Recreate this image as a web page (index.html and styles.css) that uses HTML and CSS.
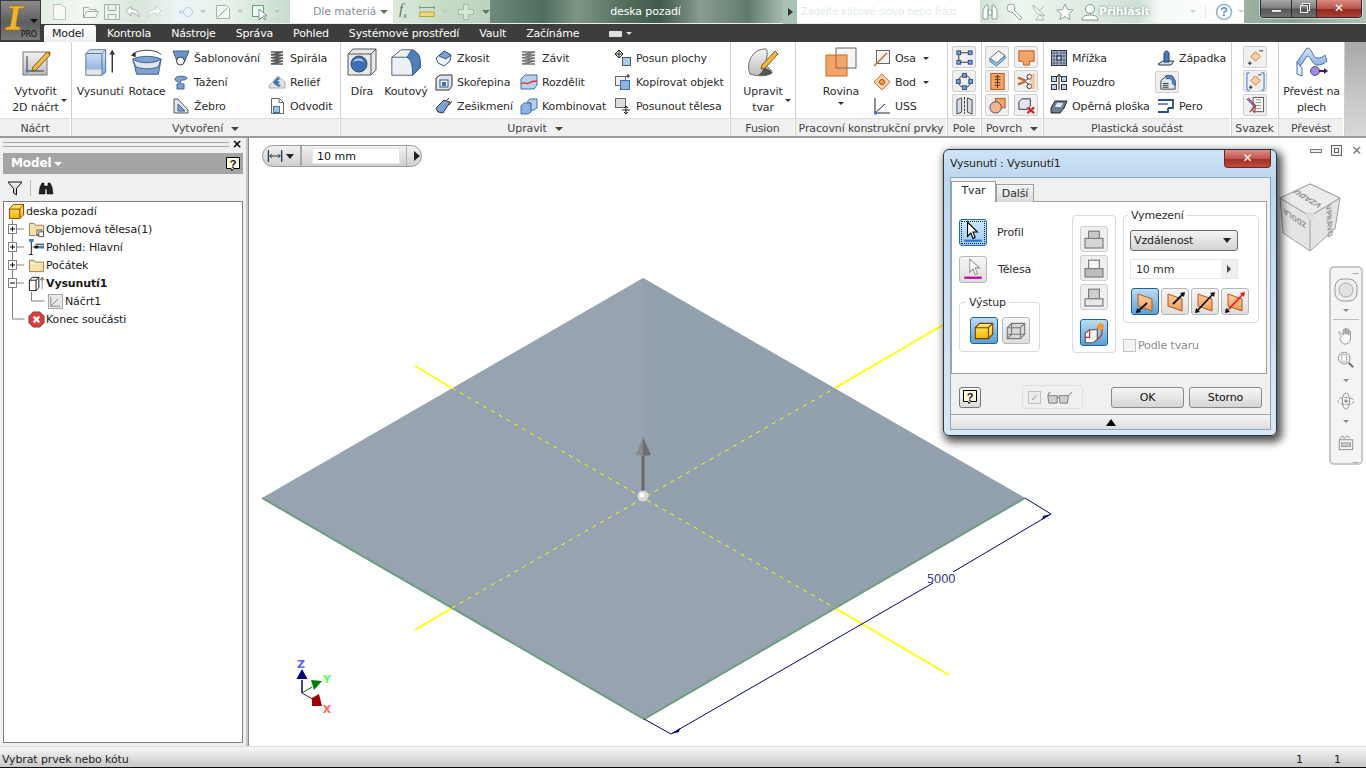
FILE: index.html
```html
<!DOCTYPE html>
<html lang="cs">
<head>
<meta charset="utf-8">
<title>deska pozadí</title>
<link rel="stylesheet" href="styles.css">
</head>
<body>
<svg class="defs" width="0" height="0">
  <defs>
    <linearGradient id="gBlue" x1="0" y1="0" x2="0" y2="1"><stop offset="0" stop-color="#dbe8f6"/><stop offset="1" stop-color="#7fa8d8"/></linearGradient>
    <linearGradient id="gGray" x1="0" y1="0" x2="0" y2="1"><stop offset="0" stop-color="#f4f4f4"/><stop offset="1" stop-color="#bdbdbd"/></linearGradient>
    <linearGradient id="gOrange" x1="0" y1="0" x2="0" y2="1"><stop offset="0" stop-color="#fbd0a8"/><stop offset="1" stop-color="#ee9a58"/></linearGradient>
    <linearGradient id="gGold" x1="0" y1="0" x2="0" y2="1"><stop offset="0" stop-color="#fff07a"/><stop offset="1" stop-color="#f2b705"/></linearGradient>
    <symbol id="tPlus" viewBox="0 0 24 18"><path d="M13 9h7M8.500 0v4.500M8.500 13.500V18" stroke="#808080" fill="none"/><rect x="4.500" y="4.500" width="8" height="9" fill="#fff" stroke="#808080"/><path d="M6 9h5M8.500 6.500v5" stroke="#000" fill="none"/></symbol>
    <symbol id="tMinus" viewBox="0 0 24 18"><path d="M13 9h7M8.500 0v4.500M8.500 13.500V18" stroke="#808080" fill="none"/><rect x="4.500" y="4.500" width="8" height="9" fill="#fff" stroke="#808080"/><path d="M6 9h5" stroke="#000" fill="none"/></symbol>
    <symbol id="folder" viewBox="0 0 18 16"><path d="M1.500 14.500v-12h5l1.500 2h8.500v10z" fill="#f7dfae" stroke="#9a7a3c"/><path d="M2 6h14" stroke="#fff2d4"/></symbol>
    <symbol id="ghostb" viewBox="0 0 20 20"><rect x="5.500" y="3.500" width="9" height="7" fill="#c9c9c9" stroke="#7e7e7e"/><rect x="2.500" y="9.500" width="15" height="8" fill="#d6d6d6" stroke="#7e7e7e"/></symbol>
    <symbol id="ghostc" viewBox="0 0 20 20"><rect x="5.500" y="3.500" width="9" height="7" fill="#f4f4f4" stroke="#7e7e7e"/><rect x="2.500" y="10.500" width="15" height="7" fill="#bdbdbd" stroke="#7e7e7e"/></symbol>
    <symbol id="ghostd" viewBox="0 0 20 20"><rect x="5.500" y="3.500" width="9" height="8" fill="#d0d0d0" stroke="#7e7e7e"/><rect x="2.500" y="11.500" width="15" height="6" fill="#e8e8e8" stroke="#7e7e7e"/></symbol>
    <symbol id="wedge" viewBox="0 0 24 24"><path d="M5 4l14 5v12L5 16z" fill="url(#gOrange)" stroke="#b5561a"/></symbol>
  </defs>
</svg>

<div class="app">
  <header class="titlebar">
    <div class="qat">
      <svg class="qi" viewBox="0 0 16 18"><path d="M2.500 1.500h8l4 4v11h-12z" fill="#f7fbf7" stroke="#b9c8bb"/></svg>
      <span class="qgap"></span>
      <svg class="qi" viewBox="0 0 18 18"><path d="M1.500 14.500v-10h5l1.500 2h6v2M1.500 14.500l3-6h12l-3 6z" fill="#f4f9f4" stroke="#9fb0a2"/></svg>
      <svg class="qi" viewBox="0 0 18 18"><path d="M1.500 1.500h15v15h-15zM5 1.500v6h8v-6M5 16.500v-5h8v5" fill="#eef5ef" stroke="#a3b3a6"/></svg>
      <svg class="qi" viewBox="0 0 18 18"><path d="M7 3L2 8l5 5V10c4 0 6 1 8 4 0-5-3-8-8-8z" fill="#f8fbf8" stroke="#a3b3a6"/></svg>
      <svg class="qi" viewBox="0 0 18 18"><path d="M11 3l5 5-5 5V10c-4 0-6 1-8 4 0-5 3-8 8-8z" fill="#f8fbf8" stroke="#c6d4c8"/></svg>
      <span class="qgap"></span>
      <svg class="qi" viewBox="0 0 18 18"><circle cx="11" cy="9" r="4.500" fill="#e9f3fb" stroke="#b5cbdd"/><path d="M7 9H2M5 6.500L2 9l3 2.500" stroke="#b5cbdd" fill="none"/></svg>
      <span class="tri-s"></span>
      <svg class="qi" viewBox="0 0 18 18"><path d="M2.500 2.500h10l3 3v10h-13z" fill="#f4f9f4" stroke="#a3b3a6"/><path d="M4 14L13 5" stroke="#92a596"/></svg>
      <span class="tri-s"></span>
      <svg class="qi" viewBox="0 0 18 18"><rect x="1.500" y="2.500" width="11" height="11" fill="#eef8ee" stroke="#5fa56c"/><path d="M8 6v11l3-3 3 3 1-1-3-3h4z" fill="#fff" stroke="#7a8a8d"/></svg>
      <span class="tri-s"></span>
    </div>
    <div class="combo"><span class="combo-text">Dle materiá</span><span class="tri-d"></span></div>
    <div class="fx">
      <span class="fx-t">f<sub>x</sub></span>
      <svg class="qi" viewBox="0 0 20 16"><path d="M2 3h16M2 1v4M18 1v4" stroke="#7a8a70" fill="none"/><rect x="2" y="8" width="16" height="5" fill="#f3d77a" stroke="#b59a3c"/></svg>
      <span class="tri-s"></span>
      <svg class="qi" viewBox="0 0 18 18"><path d="M6.500 1.500h5v5h5v5h-5v5h-5v-5h-5v-5h5z" fill="#d6e6d6" stroke="#a5baa7"/></svg>
      <span class="tri-d"></span>
    </div>
    <div class="doc-title">deska pozadí</div>
    <div class="search">
      <span class="search-arrow"></span>
      <span class="search-text">Zadejte klíčové slovo nebo frázi</span>
    </div>
    <div class="info">
      <svg class="ii" viewBox="0 0 20 20"><path d="M3 17V8l3-5h2v14zM12 17V3h2l3 5v9zM8 8h4v5H8z" fill="#fff" stroke="#8da596"/></svg>
      <svg class="ii" viewBox="0 0 20 20"><circle cx="6" cy="6" r="4" fill="#fff" stroke="#8da596"/><path d="M9 8l8 8-2 2-8-8" fill="#fff" stroke="#8da596"/></svg>
      <svg class="ii" viewBox="0 0 20 20"><path d="M3 3c1 7 5 10 12 11zM9 9l5-5M6 18l4-6 4 6z" fill="#f4f8f4" stroke="#a9bbae"/></svg>
      <svg class="ii" viewBox="0 0 20 20"><path d="M10 2l2.400 5.400 5.800.6-4.400 3.900 1.300 5.700-5.100-3-5.100 3 1.300-5.700L1.800 8l5.800-.6z" fill="#fbfdfb" stroke="#8da596"/></svg>
      <svg class="ii" viewBox="0 0 20 20"><circle cx="10" cy="7" r="4.500" fill="#fff" stroke="#7e9686"/><path d="M2 18c0-4 4-5 8-5s8 1 8 5z" fill="#fff" stroke="#7e9686"/></svg>
      <span class="login">Přihlásit</span>
      <span class="tri-w login-tri"></span>
      <span class="sep-w"></span>
      <svg class="help-c" viewBox="0 0 18 18"><circle cx="9" cy="9" r="7.500" fill="#fff" stroke="#8db2d2" stroke-width="1.500"/><text x="9" y="13" class="help-q">?</text></svg>
      <span class="tri-w"></span>
    </div>
    <div class="caption">
      <div class="win-btns">
        <span class="wb wb-min"><i></i></span>
        <span class="wb wb-res"><i></i></span>
        <span class="wb wb-close">✕</span>
      </div>
    </div>
  </header>

  <div class="app-btn">
    <svg class="app-i" viewBox="0 0 26 30"><path d="M7 2h17l-1 2-6 1-3 19 5 1-1 3H2l1-3 5-1 3-19-5-1z" fill="#f0b428" stroke="#9a6a10" stroke-width=".6"/></svg>
    <span class="app-caret"></span>
    <span class="pro">PRO</span>
  </div>

  <nav class="tabs">
    <span class="tab tab-on">Model</span>
    <span class="tab">Kontrola</span>
    <span class="tab">Nástroje</span>
    <span class="tab">Správa</span>
    <span class="tab">Pohled</span>
    <span class="tab">Systémové prostředí</span>
    <span class="tab">Vault</span>
    <span class="tab">Začínáme</span>
    <span class="tab-ctl"><i></i><b></b></span>
  </nav>

  <section class="ribbon">
    <div class="panel w-sketch">
      <div class="pbody">
        <div class="lg lg-sketch">
          <svg class="lgi" viewBox="0 0 32 32"><rect x="3" y="6" width="24" height="23" fill="url(#gGray)" stroke="#777"/><path d="M7 25h17M7 25V10" stroke="#333" fill="none"/><rect x="5.500" y="23.500" width="3" height="3" fill="#3a8ad8"/><path d="M13 21l-1 4 4-1L30 9l-3-3z" fill="#f5b840" stroke="#7d5a18"/><path d="M27 6l3 3 1-2-2-2z" fill="#c63"/></svg>
          <span class="lbl">Vytvořit<br>2D náčrt</span><span class="caret abs-sketch"></span>
        </div>
      </div>
      <div class="ptitle">Náčrt</div>
    </div>

    <div class="panel w-create">
      <div class="pbody">
        <div class="lg lg-ext">
          <svg class="lgi" viewBox="0 0 36 32"><path d="M3 7l4-4h17v24l-4 3H3z" fill="url(#gBlue)" stroke="#52739c"/><path d="M3 7h17v23M20 7l4-4" stroke="#52739c" fill="none"/><rect x="3.500" y="24" width="16" height="5.500" fill="#e5e5e5"/><path d="M31 27V6" stroke="#333" stroke-width="1.500"/><path d="M28 8l3-5 3 5z" fill="#333"/></svg>
          <span class="lbl">Vysunutí</span>
        </div>
        <div class="lg lg-rot">
          <svg class="lgi" viewBox="0 0 36 32"><path d="M2 8C10 2 26 2 33 8" stroke="#333" fill="none"/><path d="M1 9l5-3v5z" fill="#333"/><path d="M3 13c8-4 22-4 30 0l-3 16H7z" fill="#7ea2d0" stroke="#3f5f8e"/><path d="M3 13c8 5 22 5 30 0l-3 8c-7 3-16 3-24 0z" fill="#dfe6ef" stroke="#3f5f8e"/></svg>
          <span class="lbl">Rotace</span>
        </div>
        <div class="col c-create1">
          <div class="sm"><svg class="smi" viewBox="0 0 18 18"><path d="M1 2h16l-4 10H5z" fill="#6c94c6" stroke="#3f5f8e"/><circle cx="8.500" cy="12" r="4" fill="#fff" stroke="#333"/></svg>Šablonování</div>
          <div class="sm"><svg class="smi" viewBox="0 0 18 18"><path d="M3 6c0-3 10-4 12-1-1 3-4 1-6 3-2 2 1 3 3 3v5H5v-5c2 0 3-1 2-2-1 0-3 0-4-3z" fill="#7ea2d0" stroke="#3f5f8e"/></svg>Tažení</div>
          <div class="sm"><svg class="smi" viewBox="0 0 18 18"><path d="M2 2v14h14v-3L6 2z" fill="#dde5ef" stroke="#555"/><path d="M6 7v7h7z" fill="#7ea2d0" stroke="#3f5f8e"/></svg>Žebro</div>
        </div>
        <div class="col c-create2">
          <div class="sm"><svg class="smi" viewBox="0 0 18 18"><path d="M3 3h12L3 6h12L3 9h12L3 12h12L3 15h12" fill="none" stroke="#555" stroke-width="1.300"/></svg>Spirála</div>
          <div class="sm"><svg class="smi" viewBox="0 0 18 18"><path d="M1 13l9-10 7 6v6H1z" fill="#e2e2e2" stroke="#aaa"/><path d="M5 9l5-5 2 2-3 2 3 1-2 2 3 1-2 2-5-3z" fill="#3d73b4"/></svg>Reliéf</div>
          <div class="sm"><svg class="smi" viewBox="0 0 18 18"><path d="M3.500 1.500h8l4 4v11h-12z" fill="#fff" stroke="#666"/><path d="M11 1.500v4h4.500" fill="none" stroke="#666"/><rect x="5.500" y="9.500" width="6" height="6" fill="#9cc3e6" stroke="#3f72a8"/></svg>Odvodit</div>
        </div>
      </div>
      <div class="ptitle">Vytvoření<span class="tri-t"></span></div>
    </div>

    <div class="panel w-edit">
      <div class="pbody">
        <div class="lg lg-hole">
          <svg class="lgi" viewBox="0 0 32 32"><path d="M2 8l5-5h23v21l-5 5H2z" fill="#e8e8e8" stroke="#555"/><path d="M2 8h23v21M25 8l5-5" fill="none" stroke="#555"/><circle cx="13" cy="18" r="8" fill="#3f6fb0" stroke="#234f86"/><path d="M7 16a6 6 0 0 1 11 0c-3-2-8-2-11 0z" fill="#c6dbf0"/></svg>
          <span class="lbl">Díra</span>
        </div>
        <div class="lg lg-fillet">
          <svg class="lgi" viewBox="0 0 36 32"><path d="M3 11L13 3h11c6 2 9 6 9 13v6l-8 8H3z" fill="#eceff3" stroke="#4a5f7e"/><path d="M24 3c6 2 9 6 9 13v6l-8 8c0-10-1-16-6-19z" fill="#4f7fb8" stroke="#2f5588"/><path d="M3 11h16" stroke="#4a5f7e"/></svg>
          <span class="lbl">Koutový</span>
        </div>
        <div class="col c-e1">
          <div class="sm"><svg class="smi" viewBox="0 0 18 18"><path d="M1 9l8-7 7 4-1 6-6 5-6-3z" fill="#eef2f7" stroke="#2f5588"/><path d="M9 2l7 4-5 4-7-3z" fill="#7ea2d0" stroke="#2f5588"/></svg>Zkosit</div>
          <div class="sm"><svg class="smi" viewBox="0 0 18 18"><path d="M1 5l4-3h12v11l-3 4H1z" fill="#dfe6ef" stroke="#333"/><rect x="5" y="7" width="8" height="7" fill="#fff" stroke="#2f5588"/><rect x="7" y="9" width="4" height="4" fill="#3f6fb0"/></svg>Skořepina</div>
          <div class="sm"><svg class="smi" viewBox="0 0 18 18"><path d="M1 11l8-8 6 2-7 11-5-1z" fill="#7ea2d0" stroke="#333"/><path d="M12 3l2-2M14 8l3-4" stroke="#333"/></svg>Zešikmení</div>
        </div>
        <div class="col c-e2">
          <div class="sm"><svg class="smi" viewBox="0 0 18 18"><path d="M2 3h13L2 6h13L2 9h13L2 12h13L2 15h13" fill="none" stroke="#777" stroke-width="1.300"/></svg>Závit</div>
          <div class="sm"><svg class="smi" viewBox="0 0 18 18"><path d="M1 6l4-4h12v10l-3 4H1z" fill="#b9d0ea" stroke="#3f6fb0"/><path d="M1 11c3-3 5 1 8-1s5-2 8-2" fill="none" stroke="#d33" stroke-width="1.300"/></svg>Rozdělit</div>
          <div class="sm"><svg class="smi" viewBox="0 0 18 18"><path d="M1 9l3-3h7v9l-3 2H1z" fill="#8db3de" stroke="#3f6fb0"/><path d="M7 5l3-3h7v9l-3 2H11V6z" fill="#b9d0ea" stroke="#3f6fb0"/></svg>Kombinovat</div>
        </div>
        <div class="col c-e3">
          <div class="sm"><svg class="smi" viewBox="0 0 18 18"><path d="M5 1v8M1 5h8" stroke="#222"/><path d="M3 3l2-2 2 2M3 7l2 2 2-2M3 3L1 5l2 2M7 3l2 2-2 2" fill="none" stroke="#222"/><rect x="8.500" y="8.500" width="8" height="8" fill="#a9cdee" stroke="#555"/></svg>Posun plochy</div>
          <div class="sm"><svg class="smi" viewBox="0 0 18 18"><rect x="1.500" y="3.500" width="10" height="9" fill="#eef2f7" stroke="#666"/><rect x="6.500" y="7.500" width="9" height="9" fill="#8db3de" stroke="#3f6fb0"/><path d="M14 1v4M12 3h4" stroke="#222"/></svg>Kopírovat objekt</div>
          <div class="sm"><svg class="smi" viewBox="0 0 18 18"><rect x="1.500" y="1.500" width="10" height="9" fill="#ddd" stroke="#666"/><path d="M12 9v8M8 13h8" stroke="#222"/><path d="M10 11l2-2 2 2M10 15l2 2 2-2" fill="none" stroke="#222"/></svg>Posunout tělesa</div>
        </div>
      </div>
      <div class="ptitle">Upravit<span class="tri-t"></span></div>
    </div>

    <div class="panel w-fusion">
      <div class="pbody">
        <div class="lg lg-fus">
          <svg class="lgi" viewBox="0 0 34 32"><path d="M4 28C-1 16 8 2 20 3c3 4 0 12-2 16 3 2 8 4 8 8-6 4-16 3-22 1z" fill="url(#gGray)" stroke="#666"/><path d="M17 22c4 0 8 2 9 5-4 3-10 3-14 2 3-2 5-4 5-7z" fill="#555"/><path d="M16 19l-1 4 4-1L32 8l-3-3z" fill="#f5b840" stroke="#7d5a18"/></svg>
          <span class="lbl">Upravit<br>tvar</span><span class="caret abs-fus"></span>
        </div>
      </div>
      <div class="ptitle">Fusion</div>
    </div>

    <div class="panel w-work">
      <div class="pbody">
        <div class="lg lg-plane">
          <svg class="lgi" viewBox="0 0 34 32"><rect x="12" y="2" width="20" height="20" fill="#f4f4f4" stroke="#666"/><rect x="2" y="9" width="21" height="21" fill="#f4a468" stroke="#c8692a"/><path d="M12 9v13h11" fill="none" stroke="#8a6a55"/></svg>
          <span class="lbl">Rovina</span><span class="caret abs-plane"></span>
        </div>
        <div class="col c-work">
          <div class="sm"><svg class="smi" viewBox="0 0 18 18"><rect x="3.500" y="1.500" width="13" height="13" fill="#f4f4f4" stroke="#666"/><path d="M1 17L14 4" stroke="#c8692a" stroke-width="1.500"/></svg>Osa<span class="caret dd-osa"></span></div>
          <div class="sm"><svg class="smi" viewBox="0 0 18 18"><path d="M9 1l8 8-8 8-8-8z" fill="#fbd0a8" stroke="#d4742c"/><circle cx="9" cy="9" r="2.500" fill="#f4a468" stroke="#a04a10"/></svg>Bod<span class="caret dd-bod"></span></div>
          <div class="sm"><svg class="smi" viewBox="0 0 18 18"><path d="M2 1v15h15M2 16L12 7" fill="none" stroke="#222"/><rect x="1" y="14.500" width="3" height="3" fill="#2f7fd8"/></svg>USS</div>
        </div>
      </div>
      <div class="ptitle">Pracovní konstrukční prvky</div>
    </div>

    <div class="panel w-pole">
      <div class="pbody pad-pole">
        <div class="col">
          <div class="ib"><svg class="ibi" viewBox="0 0 20 20"><rect x="2" y="3" width="4" height="4" fill="#7ea2d0" stroke="#244e86"/><rect x="14" y="3" width="4" height="4" fill="#7ea2d0" stroke="#244e86"/><rect x="2" y="13" width="4" height="4" fill="#7ea2d0" stroke="#244e86"/><rect x="14" y="13" width="4" height="4" fill="#7ea2d0" stroke="#244e86"/><path d="M6 5h8M6 15h8M4 7v6" stroke="#333"/></svg></div>
          <div class="ib"><svg class="ibi" viewBox="0 0 20 20"><circle cx="10" cy="10" r="6.500" fill="none" stroke="#333"/><g fill="#7ea2d0" stroke="#244e86"><rect x="8" y="1.500" width="4" height="4"/><rect x="14.500" y="8" width="4" height="4"/><rect x="8" y="14.500" width="4" height="4"/><rect x="1.500" y="8" width="4" height="4"/></g></svg></div>
          <div class="ib"><svg class="ibi" viewBox="0 0 20 20"><path d="M2 4l5-2v15l-5 2zM13 2l5 2v15l-5-2z" fill="#cfdcec" stroke="#444"/><path d="M10 1v18" stroke="#333" stroke-dasharray="3 1"/></svg></div>
        </div>
      </div>
      <div class="ptitle">Pole</div>
    </div>

    <div class="panel w-surf">
      <div class="pbody pad-surf">
        <div class="col">
          <div class="ib"><svg class="ibi" viewBox="0 0 20 20"><path d="M2 11l9-8 7 5-9 8z" fill="#f4f4f4" stroke="#666"/><path d="M2 11v3l7 5 9-8V8l-9 8z" fill="#9cc8ea" stroke="#3f72a8"/></svg></div>
          <div class="ib"><svg class="ibi" viewBox="0 0 20 20"><rect x="3" y="1.500" width="14" height="17" fill="#f4a468" stroke="#b5561a"/><path d="M10 3v14M7 5h6M7 8h6M7 11h6M7 14h6" stroke="#5a3210"/></svg></div>
          <div class="ib"><svg class="ibi" viewBox="0 0 20 20"><rect x="8" y="2.500" width="10" height="10" fill="#f4a468" stroke="#b5561a"/><circle cx="8" cy="12" r="6" fill="#f4b488" stroke="#2f5588"/></svg></div>
        </div>
        <div class="col">
          <div class="ib"><svg class="ibi" viewBox="0 0 20 20"><path d="M2 3h16v11h-5v4H7c0-3-1-4-3-4H2z" fill="#f4a468" stroke="#b5561a"/></svg></div>
          <div class="ib"><svg class="ibi" viewBox="0 0 20 20"><path d="M1 6l8 3M1 13l8-3" stroke="#c8692a" stroke-width="2.500"/><circle cx="13" cy="15" r="2.500" fill="none" stroke="#333"/><circle cx="13" cy="5" r="2.500" fill="none" stroke="#333"/><path d="M9 9l3-2M9 10l3 3" stroke="#333"/><rect x="14" y="2" width="5" height="16" fill="#f4a468" opacity=".5"/></svg></div>
          <div class="ib"><svg class="ibi" viewBox="0 0 20 20"><path d="M2 6l3-3h9v8l-3 3H2z" fill="#dfe6ef" stroke="#334"/><path d="M11 12l7 6M18 12l-7 6" stroke="#d0281c" stroke-width="2.200"/></svg></div>
        </div>
      </div>
      <div class="ptitle">Povrch<span class="tri-t"></span></div>
    </div>

    <div class="panel w-plast">
      <div class="pbody">
        <div class="col c-pl1">
          <div class="sm"><svg class="smi" viewBox="0 0 18 18"><rect x="1.500" y="1.500" width="15" height="15" fill="#a9c0da" stroke="#334"/><path d="M4 2v14M7 2v14M11 2v14M14 2v14M2 4h14M2 7h14M2 11h14M2 14h14" stroke="#334" stroke-width=".6"/><rect x="7" y="7" width="4" height="4" fill="#dde" stroke="#223"/></svg>Mřížka</div>
          <div class="sm"><svg class="smi" viewBox="0 0 18 18"><g fill="#b9d0ea" stroke="#334"><rect x="1.500" y="3.500" width="5" height="5"/><rect x="11.500" y="3.500" width="5" height="5"/><rect x="1.500" y="11.500" width="5" height="5"/><rect x="11.500" y="11.500" width="5" height="5"/></g><path d="M9 17V2M7 4l2-3 2 3" fill="none" stroke="#222"/></svg>Pouzdro</div>
          <div class="sm"><svg class="smi" viewBox="0 0 18 18"><path d="M1 11l4-7h12l-3 7-4 5H1z" fill="#6d7f92" stroke="#222"/><path d="M5 10l2-4h6l-2 4z" fill="#dfe6ef"/></svg>Opěrná ploška</div>
        </div>
        <div class="col c-pl2">
          <div class="sm"><svg class="smi" viewBox="0 0 18 18"><path d="M1 15l5-3h11l-3 4H2z" fill="#cfdcec" stroke="#334"/><path d="M7 13V5c0-4 5-4 5 0v8z" fill="#4a7db8" stroke="#1f4370"/></svg>Západka</div>
          <div class="ib ib-pl"><svg class="ibi" viewBox="0 0 20 20"><path d="M3 8l6-5h6l3 5v9H3z" fill="#dfe6ef" stroke="#444"/><path d="M8 3c6-2 11 3 10 10l-3-2c1-4-2-6-6-5z" fill="#5f8ec6" stroke="#27548c"/><path d="M5 11h6M5 13h6M5 15h6" stroke="#333"/></svg></div>
          <div class="sm"><svg class="smi" viewBox="0 0 18 18"><path d="M1 3h15v8h-5M1 15h10v-4" fill="none" stroke="#24518a" stroke-width="1.800"/><path d="M1 7h10" stroke="#24518a" stroke-width="1.300"/></svg>Pero</div>
        </div>
      </div>
      <div class="ptitle">Plastická součást</div>
    </div>

    <div class="panel w-harn">
      <div class="pbody pad-harn">
        <div class="col">
          <div class="ib"><svg class="ibi" viewBox="0 0 20 20"><path d="M10 4l5 5-5 5-5-5z" fill="#fbd0a8" stroke="#d4742c"/><path d="M14 3h4M2 16h4M4 14v4" stroke="#222"/></svg></div>
          <div class="ib"><svg class="ibi" viewBox="0 0 20 20"><path d="M10 4l5 5-5 5-5-5z" fill="#fbd0a8" stroke="#d4742c"/><path d="M13 3h3M3 16h4M5 14v4" stroke="#222"/><path d="M4 1H1v18h3M16 1h3v18h-3" fill="none" stroke="#2f6fd8"/></svg></div>
          <div class="ib"><svg class="ibi" viewBox="0 0 20 20"><rect x="7.500" y="1.500" width="11" height="15" fill="#fff" stroke="#555"/><path d="M10 4h6M10 7h6M10 10h6M10 13h6" stroke="#888"/><path d="M2 2l8 8-1 8M10 10l-6 7" fill="none" stroke="#c33" stroke-width="1.300"/><path d="M1 3l8 8" stroke="#36c" stroke-width="1.300"/></svg></div>
        </div>
      </div>
      <div class="ptitle">Svazek</div>
    </div>

    <div class="panel w-conv">
      <div class="pbody">
        <div class="lg lg-conv">
          <svg class="lgi" viewBox="0 0 34 32"><path d="M2 16L12 2c5 0 6 10 10 10s6-1 8-3l2 6c-3 3-7 4-10 4-5 0-6-9-10-9L4 22z" fill="url(#gBlue)" stroke="#3f6fb0"/><path d="M2 16v12l5 2V22z" fill="#eef2f7" stroke="#3f6fb0"/><circle cx="20" cy="25" r="4.500" fill="#9c8ad8" stroke="#5c4aa0"/><path d="M24 25h7" stroke="#30206a" stroke-width="2"/><path d="M29 22l4 3-4 3z" fill="#30206a"/></svg>
          <span class="lbl">Převést na<br>plech</span>
        </div>
      </div>
      <div class="ptitle">Převést</div>
    </div>
    <div class="rib-end"></div>
  </section>

  <main class="workspace">
    <aside class="browser">
      <div class="grip"><span class="grip-lines"></span><span class="grip-x">×</span></div>
      <div class="bhead">
        <span class="bhead-t">Model<i class="tri-h"></i></span>
        <svg class="bhelp" viewBox="0 0 16 16"><path d="M1.500 1.500h13v11h-6l-1.500 2-1-2h-4.500z" fill="#fffbe0" stroke="#000"/><text x="8" y="11.500" class="help-b">?</text></svg>
      </div>
      <div class="btools">
        <svg class="bt" viewBox="0 0 16 16"><path d="M1 2h14L9.500 8.500V15l-3-2V8.500z" fill="url(#gGray)" stroke="#111"/></svg>
        <span class="bt-sep"></span>
        <svg class="bt" viewBox="0 0 16 16"><path d="M1 14l1-7 2-4h2v3h4V3h2l2 4 1 7H9V9H7v5z" fill="#222" stroke="#000" stroke-width=".5"/></svg>
      </div>
      <div class="tree">
        <div class="row row-root"><svg class="ti" viewBox="0 0 18 18"><path d="M1.500 6.500l4-5h11v11l-4 4h-11z" fill="url(#gGold)" stroke="#8c3a00"/><path d="M1.500 6.500h11v10M12.500 6.500l4-5" fill="none" stroke="#8c3a00"/></svg>deska pozadí</div>
        <div class="row"><svg class="ex"><use href="#tPlus"/></svg><svg class="ti" viewBox="0 0 18 18"><path d="M1.500 15.500v-13h5l1.500 2h8.500v11z" fill="#f7dfae" stroke="#8a7a5c"/><rect x="9.500" y="9.500" width="5" height="5" fill="#fff" stroke="#555"/><rect x="11.500" y="11.500" width="5" height="5" fill="#fff" stroke="#555"/></svg>Objemová tělesa(1)</div>
        <div class="row"><svg class="ex"><use href="#tPlus"/></svg><svg class="ti" viewBox="0 0 18 18"><path d="M3.500 1v15M1 16.500h4M8 5.500h9M5 8.500h12" fill="none" stroke="#111"/><rect x="1" y="0" width="5" height="3" fill="#3a7cc4"/><rect x="7" y="7" width="4" height="3" fill="#111"/><rect x="12" y="7" width="5" height="3" fill="#3a7cc4"/></svg>Pohled: Hlavní</div>
        <div class="row"><svg class="ex"><use href="#tPlus"/></svg><svg class="ti"><use href="#folder"/></svg>Počátek</div>
        <div class="row row-b"><svg class="ex"><use href="#tMinus"/></svg><svg class="ti" viewBox="0 0 18 18"><path d="M1.500 5.500l3-3h7v11l-3 3h-7z" fill="#fff" stroke="#111"/><path d="M1.500 5.500h7v11M8.500 5.500l3-3" fill="none" stroke="#111"/><path d="M15 15V3M13 5l2-3 2 3z" fill="#888" stroke="#888"/></svg>Vysunutí1</div>
        <div class="row"><svg class="ex2" viewBox="0 0 43 18"><path d="M8.500 0v18M27.500 0v9h13" fill="none" stroke="#808080"/></svg><svg class="ti" viewBox="0 0 18 18"><rect x="1.500" y="1.500" width="15" height="15" fill="#e8e8e8" stroke="#a0a0a0"/><path d="M4 4v10h10M4 14l8-8" fill="none" stroke="#888"/></svg>Náčrt1</div>
        <div class="row"><svg class="ex" viewBox="0 0 24 18"><path d="M8.500 0v9h12" fill="none" stroke="#808080"/></svg><svg class="ti" viewBox="0 0 18 18"><path d="M5.500 1h7L17 5.500v7L12.500 17h-7L1 12.500v-7z" fill="#e33a3a" stroke="#555"/><path d="M6 6l6 6M12 6l-6 6" stroke="#fff" stroke-width="2.400"/></svg>Konec součásti</div>
      </div>
    </aside>
    <div class="splitter"></div>

    <div class="viewport">
      <svg class="scene" viewBox="249 138 1117 608">
        <path d="M415 366L452 388M835 608L949 675M415 630L452 608M835 388L960 315" stroke="#ffff00" stroke-width="2" fill="none"/>
        <polygon points="643,278 1025,498 644,719 262,498" fill="#97a3b1"/>
        <polygon points="643,278 1025,498 835,608 643,498" fill="#93a0ae"/>
        <path d="M262 498L644 719L1025 498" stroke="#6d9f7b" stroke-width="2" fill="none"/>
        <path d="M452 388L835 608M452 608L835 388" stroke="#ffff00" stroke-width="1" stroke-dasharray="4 5" fill="none"/>
        <path d="M644 719L671 734L933 583M953 572L1051 514L1025 498" stroke="#000080" fill="none"/>
        <path d="M671 734l9-6-1 4zM1051 514l-9 6 1-4z" fill="#000080"/>
        <text x="941" y="583" class="dim">5000</text>
        <path d="M643 456V495" stroke="#6a6a6e" stroke-width="3"/>
        <path d="M643 437L636 455L643 456z" fill="#8a8a8a"/><path d="M643 437L651 455L643 456z" fill="#6e6e72"/>
        <circle cx="643" cy="496" r="5.500" fill="#d8d8d8"/><circle cx="642" cy="495" r="2.500" fill="#fff"/>
        <path d="M302 693V680" stroke="#000080" stroke-width="1.500"/><path d="M302 669l-5.500 10h11z" fill="#000080"/>
        <path d="M302 693l10-6" stroke="#008000"/><path d="M322 681l-11-1 3 10z" fill="#008000"/>
        <path d="M302 693l12 7" stroke="#a00000"/><path d="M322 706l-3-12-7 4v8z" fill="#a00000"/>
        <text x="301" y="668" class="axis a-z">Z</text><text x="327" y="683" class="axis a-y">Y</text><text x="327" y="713" class="axis a-x">X</text>
      </svg>

      <div class="dimbar">
        <span class="dim-btn"><svg class="dim-i" viewBox="0 0 18 14"><path d="M1.500 1v12M15.500 1v12" stroke="#1e3a78" stroke-width="1.500"/><path d="M3 7h11M5 5L3 7l2 2M12 5l2 2-2 2" fill="none" stroke="#222"/></svg><i class="tri-dk"></i></span>
        <span class="dim-field"><input class="dim-input" value="10 mm" readonly></span>
        <span class="dim-go"><i></i></span>
      </div>

      <div class="vctl"><span class="vc-min"></span><span class="vc-res"><i></i></span><span class="vc-x">✕</span></div>

      <svg class="cube" viewBox="1278 182 64 72">
        <path d="M1310 184L1340 198L1335 229L1310 251L1283 233L1280 198z" fill="#e4e4e4" stroke="#a0a0a0"/>
        <path d="M1280 198L1310 216L1340 198M1310 216V251" fill="none" stroke="#a0a0a0"/>
        <path d="M1310 184L1340 198L1310 216L1280 198z" fill="#ececec" stroke="#a0a0a0"/>
        <circle cx="1310" cy="216" r="4" fill="#dcdcdc"/>
        <text class="cube-t" transform="matrix(-.85 -.5 .85 -.5 1323 205)">VZADU</text>
        <text class="cube-t" transform="matrix(-.75 -.5 0 -1 1306 223)">ZDOLA</text>
        <text class="cube-t" transform="matrix(.05 .9 -.85 .5 1326 206)">VPRAVO</text>
      </svg>

      <div class="navbar">
        <span class="nav-x"></span>
        <svg class="nav-wheel" viewBox="0 0 24 24"><rect x="1" y="1" width="22" height="22" rx="8" fill="#efefef" stroke="#999"/><circle cx="12" cy="12" r="7" fill="#e2e2e2" stroke="#aaa"/></svg>
        <span class="nav-c"></span>
        <span class="nav-line"></span>
        <svg class="nav-i" viewBox="0 0 20 20"><path d="M5 10L2 7c-1-1 1-2 2-1l3 3V3c0-1 2-1 2 0v5V2c0-1 2-1 2 0v6V3c0-1 2-1 2 0v6-4c0-1 2-1 2 0v8c0 4-3 6-6 6-3 0-4-2-6-6z" fill="#fafafa" stroke="#8a8a8a"/></svg>
        <svg class="nav-i" viewBox="0 0 20 20"><circle cx="8" cy="8" r="6.500" fill="#f4f4f4" stroke="#8a8a8a"/><rect x="5.500" y="4" width="5" height="8" fill="#fff" stroke="#aaa"/><path d="M13 13l5 5" stroke="#777" stroke-width="2.500"/></svg>
        <span class="nav-c"></span>
        <svg class="nav-i" viewBox="0 0 20 20"><ellipse cx="10" cy="10" rx="9" ry="4" fill="none" stroke="#8a8a8a" stroke-dasharray="4 2"/><ellipse cx="10" cy="10" rx="4" ry="9" fill="none" stroke="#8a8a8a"/><path d="M8 10h4M10 8v4" stroke="#666"/></svg>
        <span class="nav-c"></span>
        <svg class="nav-i" viewBox="0 0 20 20"><rect x="2.500" y="7.500" width="15" height="11" fill="#f0f0f0" stroke="#888"/><path d="M3 7l3-4 2 3 4-3 2 3" fill="none" stroke="#888"/><rect x="5" y="11" width="10" height="4" fill="#c9c9c9" stroke="#999"/></svg>
        <span class="nav-m"></span>
      </div>

      <div class="dialog">
        <div class="dlg-cap"><span>Vysunutí : Vysunutí1</span><span class="dlg-close">✕</span></div>
        <div class="dlg-in">
          <div class="dlg-tabs"><span class="dt dt-on">Tvar</span><span class="dt">Další</span></div>
          <div class="dlg-body">
            <div class="dc1">
              <div class="dl-row">
                <span class="db db-sel"><svg class="dbi" viewBox="0 0 22 22"><path d="M6 2v13l3-3 2 5 2-1-2-5h4z" fill="#fff" stroke="#000"/><path d="M3 19h16" stroke="#2a72d8" stroke-width="2"/></svg></span>
                <span class="dl-t">Profil</span>
              </div>
              <div class="dl-row dl-r2">
                <span class="db"><svg class="dbi" viewBox="0 0 22 22"><path d="M8 2v12l3-3 2 5 2-1-2-5h4z" fill="#fff" stroke="#999"/><path d="M3 19h16" stroke="#c000a0" stroke-width="2"/></svg></span>
                <span class="dl-t dl-t2">Tělesa</span>
              </div>
              <fieldset class="fs fs-out">
                <legend>Výstup</legend>
                <span class="db db-blue"><svg class="dbi" viewBox="0 0 22 22"><path d="M3 8l4-4h12v10l-4 4H3z" fill="url(#gGold)" stroke="#7a3a00"/><path d="M3 8h12v10M15 8l4-4" fill="none" stroke="#7a3a00"/></svg></span>
                <span class="db"><svg class="dbi" viewBox="0 0 22 22"><path d="M3 8l4-4h12v10l-4 4H3z" fill="#d8d8d8" stroke="#777"/><path d="M3 8h12v10M15 8l4-4M7 4v10H3M7 14l-4 4M7 14h12" fill="none" stroke="#777"/></svg></span>
              </fieldset>
            </div>
            <div class="dc2">
              <span class="db db-g"><svg class="dbi"><use href="#ghostb"/></svg></span>
              <span class="db db-g"><svg class="dbi"><use href="#ghostc"/></svg></span>
              <span class="db db-g"><svg class="dbi"><use href="#ghostd"/></svg></span>
              <span class="db db-blue db-new"><svg class="dbi" viewBox="0 0 22 22"><path d="M3 11l4-3h7v9l-4 3H3z" fill="#f4f4f4" stroke="#555"/><path d="M7 8v7H3M14 8c1-3 3-4 5-4l-1 9-4 4" fill="none" stroke="#d02020"/><path d="M17 1l1 2 2-1-1 2 2 1-2 1 1 2-2-1-1 2-1-2-2 1 1-2-2-1 2-1-1-2 2 1z" fill="#ff9a18"/></svg></span>
            </div>
            <div class="dc3">
              <fieldset class="fs fs-lim">
                <legend>Vymezení</legend>
                <div class="sel"><span>Vzdálenost</span><i class="tri-dk"></i></div>
                <div class="num"><span>10 mm</span><span class="num-go"><i></i></span></div>
                <div class="dirs">
                  <span class="db db-blue"><svg class="dbi" viewBox="0 0 24 24"><use href="#wedge"/><path d="M14 13L4 22" stroke="#111" stroke-width="1.800"/><path d="M3 23l1-5 4 4z" fill="#111"/></svg></span>
                  <span class="db"><svg class="dbi" viewBox="0 0 24 24"><use href="#wedge"/><path d="M10 14L20 4" stroke="#111" stroke-width="1.800"/><path d="M22 2l-1 5-4-4z" fill="#111"/></svg></span>
                  <span class="db"><svg class="dbi" viewBox="0 0 24 24"><use href="#wedge"/><path d="M4 21L20 4" stroke="#111" stroke-width="1.800"/><path d="M22 2l-1 5-4-4zM2 23l1-5 4 4z" fill="#111"/></svg></span>
                  <span class="db"><svg class="dbi" viewBox="0 0 24 24"><use href="#wedge"/><path d="M4 21L20 4" stroke="#f01818" stroke-width="1.800"/><path d="M22 2l-1 5-4-4z" fill="#f01818"/><path d="M2 23l1-5 4 4z" fill="#111"/></svg></span>
                </div>
              </fieldset>
              <div class="chk"><span class="box"></span><span>Podle tvaru</span></div>
            </div>
          </div>
          <div class="dlg-foot">
            <span class="help-btn"><svg class="help-i" viewBox="0 0 16 16"><path d="M1.500 1.500h13v11h-6l-1.500 2-1-2h-4.500z" fill="#fffbe0" stroke="#000"/><text x="8" y="11.500" class="help-b">?</text></svg></span>
            <span class="glass"><span class="gbox">✓</span><svg class="gl-i" viewBox="0 0 30 16"><path d="M2 6h10v8H3zM14 6h10l-1 8h-8zM12 8h2M24 6l4-4" fill="#cfcfcf" stroke="#777"/><path d="M2 6l1-3h2" fill="none" stroke="#777"/></svg></span>
            <span class="spacer"></span>
            <span class="btn">OK</span>
            <span class="btn">Storno</span>
          </div>
          <div class="dlg-more"><i></i></div>
        </div>
      </div>
    </div>
  </main>

  <footer class="status">
    <span class="st-l">Vybrat prvek nebo kótu</span>
    <span class="st-n st-n1">1</span>
    <span class="st-n">1</span>
  </footer>
</div>
</body>
</html>
```

FILE: styles.css
```css
* { box-sizing: border-box; }
html, body { margin: 0; height: 100%; overflow: hidden; }
body { font: 11px/13px "DejaVu Sans", "Liberation Sans", sans-serif; letter-spacing: -.13px; color: #2c2c2c; background: #fff; }
.defs { position: absolute; }
.app { position: relative; width: 1366px; height: 768px; display: flex; flex-direction: column; overflow: hidden; }

/* title bar */
.titlebar { height: 24px; display: flex; flex: none; align-items: stretch; border-bottom: 1px solid #e8efe8; }
.qat { width: 290px; padding-left: 50px; display: flex; align-items: center; gap: 3px;
  background: linear-gradient(90deg, #c3d3c5 0, #e4efe4 14%, #f3f8f3 30%, #d7e6d8 48%, #eef4f8 62%, #e6f1e7 80%, #c8dcc9 100%); }
.qi { width: 18px; height: 18px; flex: none; }
.qgap { width: 8px; }
.tri-s { width: 0; height: 0; border: 3px solid transparent; border-top: 3px solid #b8c7ba; border-bottom: 0; margin: 0 5px 0 2px; flex: none; }
.combo { width: 103px; background: #fff; display: flex; align-items: center; padding-left: 23px; position: relative; }
.combo-text { color: #8d8d99; white-space: nowrap; width: 64px; flex: none; font-size: 11px; }
.tri-d { width: 0; height: 0; border: 4px solid transparent; border-top: 4px solid #5d7460; border-bottom: 0; flex: none; margin-left: 3px; }
.fx { width: 97px; display: flex; align-items: center; gap: 4px; padding-left: 6px; background: linear-gradient(90deg, #dcebdc, #c6dcc8 50%, #bcd3bf); }
.fx-t { font: italic 15px/18px "Liberation Serif", serif; color: #5f6f5f; width: 20px; }
.fx-t sub { font-size: 9px; }
.doc-title { width: 293px; padding-left: 18px; display: flex; align-items: center; justify-content: center; color: #fff; font-size: 11px;
  background: linear-gradient(90deg, #6e8a7a 0, #4f6e5e 18%, #7e9585 30%, #55705e 45%, #3f5a4b 58%, #8a9c90 72%, #5f7b6c 88%, #a6bcae 100%); }
.search { width: 197px; display: flex; align-items: center; background: linear-gradient(90deg, #bcd2c4 0, #fff 8%); }
.search-arrow { width: 14px; height: 24px; flex: none; position: relative; background: #a9c4b3; }
.search-arrow::after { content: ""; position: absolute; left: 5px; top: 8px; border: 4px solid transparent; border-left: 5px solid #334; border-right: 0; }
.search-text { color: #e3ebe7; font-size: 10px; padding-left: 4px; white-space: nowrap; overflow: hidden; }
.info { width: 264px; display: flex; align-items: center; gap: 5px; background: linear-gradient(90deg, #cfe2d5 0, #eef6f0 14%, #dbe9df 45%, #cfe0d4 60%, #f6faf7 68%, #fff 100%); }
.ii { width: 20px; height: 20px; flex: none; }
.login { color: #fff; font-weight: 700; font-size: 11px; text-shadow: 0 0 3px #6f8f7f; width: 48px; margin-left: -6px; white-space: nowrap; }
.login-tri { margin-left: 38px; }
.tri-w { width: 0; height: 0; border: 3px solid transparent; border-top: 3px solid #c4d0d8; border-bottom: 0; flex: none; }
.sep-w { width: 1px; height: 14px; background: #e6ecec; flex: none; margin-left: 4px; }
.help-c { width: 18px; height: 18px; flex: none; margin-left: 4px; }
.help-q { font: 700 13px "Liberation Sans", sans-serif; fill: #5c93c6; text-anchor: middle; }
.caption { flex: 1; background: linear-gradient(90deg, #9cb2a3, #8ba092 40%, #b2c2b5); display: flex; justify-content: flex-end; padding-right: 4px; }
.win-btns { display: flex; height: 18px; width: 102px; border: 1px solid #2a2a2a; border-top: 0; border-radius: 0 0 4px 4px; overflow: hidden; box-shadow: 0 0 0 1px rgba(255,255,255,.5); }
.wb { display: flex; align-items: center; justify-content: center; background: linear-gradient(#a8a8a8, #808080 45%, #565656 55%, #707070); color: #fff; border-right: 1px solid #2a2a2a; }
.wb-min { width: 31px; } .wb-res { width: 25px; }
.wb-close { flex: 1; background: linear-gradient(#d98a80, #b8544a 50%, #8e2a20 55%, #b04036); border: 0; font-size: 12px; font-weight: 700; }
.wb-min i { width: 11px; height: 4px; background: #e8e8e8; border: 1px solid #555; margin-top: 4px; }
.wb-res i { width: 8px; height: 8px; border: 1px solid #eee; box-shadow: 2px -2px 0 -1px #444, 2px -2px 0 0 #eee; }

/* app button */
.app-btn { position: absolute; left: 0; top: 0; width: 41px; height: 41px; background: linear-gradient(#8b8b8b, #5e5e5e 55%, #7a7a7a); border: 1px solid #3a3a3a; z-index: 5; }
.app-i { position: absolute; left: 2px; top: 3px; width: 24px; height: 28px; }
.app-caret { position: absolute; left: 29px; top: 18px; border: 4px solid transparent; border-top: 4px solid #111; border-bottom: 0; }
.pro { position: absolute; right: 3px; bottom: 1px; font-size: 8px; line-height: 9px; color: #111; }

/* tabs */
.tabs { height: 18px; flex: none; background: #3d3d3d; padding-left: 44px; display: flex; align-items: flex-end; color: #fff; letter-spacing: -.17px; }
.tab { padding: 0 10px; height: 17px; line-height: 17px; font-size: 11px; white-space: nowrap; }
.tab-on { background: linear-gradient(#fff, #eef1f4); color: #222; padding: 0 8px; border-radius: 2px 2px 0 0; width: 52px; margin-right: 1px; }
.tab-ctl { display: flex; align-items: center; gap: 4px; height: 17px; margin-left: 20px; }
.tab-ctl i { width: 13px; height: 6px; background: #e0e0e0; border-radius: 1px; }
.tab-ctl b { border: 3px solid transparent; border-top: 3px solid #ddd; border-bottom: 0; }

/* ribbon */
.ribbon { height: 94px; flex: none; display: flex; background: #fff; }
.panel { display: flex; flex-direction: column; border-right: 1px solid #cfcfcf; flex: none; }
.w-sketch { width: 72px; } .w-create { width: 269px; } .w-edit { width: 390px; } .w-fusion { width: 65px; }
.w-work { width: 152px; } .w-pole { width: 34px; } .w-surf { width: 62px; } .w-plast { width: 188px; } .w-harn { width: 47px; } .w-conv { width: 66px; }
.rib-end { flex: 1; background: linear-gradient(#a8a8a8, #c8c8c8 60%, #d8d8d8); }
.pbody { height: 76px; display: flex; padding-top: 4px; position: relative; }
.ptitle { height: 18px; margin-right: 1px; padding-top: 2px; background: #f0f0f0; border-top: 1px solid #dcdcdc; display: flex; align-items: center; justify-content: center; gap: 8px; color: #444; white-space: nowrap; overflow: hidden; }
.tri-t { width: 0; height: 0; border: 4px solid transparent; border-top: 4px solid #444; border-bottom: 0; }
.lg { display: flex; flex-direction: column; align-items: center; text-align: center; flex: none; position: relative; }
.lgi { width: 34px; height: 32px; flex: none; }
.lbl { display: block; line-height: 16px; white-space: nowrap; margin-top: 6px; }
.lg-sketch { width: 71px; }
.lg-ext { width: 52px; margin-left: 2px; } .lg-rot { width: 42px; }
.lg-hole { width: 42px; } .lg-fillet { width: 46px; }
.lg-fus { width: 64px; } .lg-plane { width: 64px; margin-left: 13px; } .lg-conv { width: 65px; }
.caret { border: 3px solid transparent; border-top: 3px solid #333; border-bottom: 0; width: 0; height: 0; display: inline-block; }
.abs-sketch { position: absolute; left: 61px; top: 53px; }
.abs-fus { position: absolute; left: 54px; top: 53px; }
.abs-plane { position: absolute; left: 29px; top: 56px; }
.col { display: flex; flex-direction: column; flex: none; }
.sm { height: 24px; display: flex; align-items: center; gap: 4px; white-space: nowrap; }
.smi { width: 18px; height: 18px; flex: none; }
.c-create1 { width: 96px; margin-left: 4px; } .c-create2 { width: 70px; }
.c-e1 { width: 85px; margin-left: 6px; } .c-e2 { width: 94px; } .c-e3 { width: 110px; }
.c-work { width: 70px; }
.dd-osa, .dd-bod { margin-left: 3px; }
.ib { width: 24px; height: 22px; margin: 0 0 2px; background: #f0f0f0; border: 1px solid #cfcfcf; border-radius: 2px; display: flex; align-items: center; justify-content: center; }
.ibi { width: 19px; height: 19px; }
.pad-pole { padding-left: 4px; } .pad-surf { padding-left: 3px; gap: 5px; } .pad-harn { padding-left: 11px; }
.c-pl1 { width: 107px; margin-left: 6px; } .c-pl2 { width: 70px; }
.ib-pl { margin-left: -2px; margin-top: 1px; margin-bottom: 1px; }

/* workspace */
.workspace { flex: 1; min-height: 0; display: flex; background: #f0f0f0; border-top: 2px solid #9a9a9a; }
.browser { width: 245px; flex: none; background: #f0f0f0; display: flex; flex-direction: column; padding: 0 2px 3px 3px; }
.grip { height: 13px; flex: none; display: flex; align-items: center; gap: 2px; }
.grip-lines { flex: 1; height: 5px; border-top: 1px solid #a8a8a8; border-bottom: 1px solid #a8a8a8; }
.grip-x { width: 12px; text-align: center; font-weight: 700; font-size: 12px; color: #000; }
.bhead { height: 21px; flex: none; background: #a5a5a5; display: flex; align-items: center; justify-content: space-between; padding: 0 2px 0 8px; margin-top: 2px; }
.bhead-t { color: #fff; font-weight: 700; font-size: 12px; display: flex; align-items: center; gap: 3px; }
.tri-h { border: 4px solid transparent; border-top: 4px solid #fff; border-bottom: 0; width: 0; height: 0; }
.bhelp { width: 16px; height: 16px; }
.help-b { font: 700 11px "Liberation Sans", sans-serif; fill: #111; text-anchor: middle; }
.btools { height: 27px; flex: none; display: flex; align-items: center; gap: 7px; padding-left: 4px; }
.bt { width: 16px; height: 16px; }
.bt-sep { width: 1px; height: 16px; background: #bbb; }
.tree { flex: 1; min-height: 0; background: #fff; border: 1px solid #808080; color: #1a1a1a; }
.row { height: 18px; display: flex; align-items: center; white-space: nowrap; }
.row-root { padding-left: 4px; }
.ex { width: 24px; height: 18px; flex: none; }
.ex2 { width: 43px; height: 18px; flex: none; }
.ti { width: 17px; height: 17px; flex: none; margin-right: 1px; }
.row-b { font-weight: 700; }
.splitter { width: 4px; flex: none; background: linear-gradient(90deg, #f0f0f0 1px, #c8c8c8 1px, #c8c8c8 3px, #888 3px); }
.viewport { flex: 1; min-width: 0; position: relative; background: #fff; overflow: hidden; }
.scene { display: block; width: 100%; height: 100%; }
.dim { font: 12px "DejaVu Sans", sans-serif; letter-spacing: -.5px; fill: #3c3c96; text-anchor: middle; }
.axis { font: 700 11px "DejaVu Sans", sans-serif; text-anchor: middle; }
.a-z { fill: #5a5aff; } .a-y { fill: #5aff5a; } .a-x { fill: #ff6a6a; }

.dimbar { position: absolute; left: 13px; top: 7px; width: 160px; height: 22px; display: flex; border: 1px solid #9a9a9a; border-radius: 11px; background: linear-gradient(#f2f2f2, #cfcfcf); overflow: hidden; }
.dim-btn { width: 39px; display: flex; align-items: center; gap: 2px; padding-left: 4px; border-right: 2px solid #a8a8a8; flex: none; }
.dim-i { width: 17px; height: 14px; flex: none; }
.tri-dk { width: 0; height: 0; border: 4px solid transparent; border-top: 5px solid #222; border-bottom: 0; display: inline-block; }
.dim-field { flex: 1; display: flex; align-items: center; padding: 0 6px 0 10px; }
.dim-input { width: 88px; height: 16px; border: 1px solid #e4e4e4; background: #fff; padding: 0 4px; font: 11px "DejaVu Sans", sans-serif; color: #111; outline: 0; }
.dim-go { width: 20px; border-left: 1px solid #b0b0b0; display: flex; align-items: center; justify-content: center; flex: none; }
.dim-go i { border: 5px solid transparent; border-left: 6px solid #222; border-right: 0; }

.vctl { position: absolute; right: 4px; top: 6px; width: 52px; display: flex; align-items: center; justify-content: space-between; }
.vc-min { width: 12px; height: 4px; border: 1px solid #777; background: #eee; }
.vc-res { width: 11px; height: 11px; border: 1px solid #666; background: #eee; display: flex; align-items: center; justify-content: center; }
.vc-res i { width: 5px; height: 5px; border: 1px solid #666; }
.vc-x { color: #777; font-size: 13px; line-height: 13px; font-weight: 700; }
.cube { position: absolute; left: 1029px; top: 44px; width: 64px; height: 72px; }
.cube-t { font: 700 8px "DejaVu Sans", sans-serif; fill: #9a9a9a; }

.navbar { position: absolute; left: 1080px; top: 128px; width: 34px; height: 199px; background: #f4f4f4; border: 2px solid #c8c8c8; border-radius: 5px; display: flex; flex-direction: column; align-items: center; }
.nav-x { width: 7px; height: 7px; border-radius: 50%; background: #a0a0a0; align-self: flex-end; margin: 5px 2px 4px 0; }
.nav-wheel { width: 24px; height: 24px; flex: none; }
.nav-c { width: 0; height: 0; border: 3px solid transparent; border-top: 3px solid #888; border-bottom: 0; margin: 7px 0; flex: none; }
.nav-line { width: 26px; height: 1px; background: #bbb; margin-bottom: 4px; flex: none; }
.nav-i { width: 18px; height: 18px; margin: 3px 0; flex: none; }
.nav-m { width: 7px; height: 7px; border-radius: 50%; background: #a0a0a0; align-self: flex-end; margin: 8px 2px 0 0; }

/* dialog */
.dialog { position: absolute; left: 694px; top: 11px; width: 334px; height: 287px; border: 1px solid #2a3440; border-radius: 6px; background: linear-gradient(#cfe3f5, #bcd7ef 10%, #cde1f3 60%, #d9e8f6); box-shadow: 3px 4px 9px 2px rgba(0,0,0,.7); display: flex; flex-direction: column; padding: 0 5px 5px 6px; }
.dlg-cap { height: 27px; flex: none; display: flex; justify-content: space-between; padding-top: 7px; color: #1c1c1c; white-space: nowrap; }
.dlg-close { width: 47px; height: 18px; margin-top: -7px; background: linear-gradient(#dc8f86, #c0564c 50%, #9e3026 55%, #c24a3e); border: 1px solid #6a2a24; border-top: 0; border-radius: 0 0 4px 4px; color: #fff; text-align: center; font-weight: 700; line-height: 17px; font-size: 12px; }
.dlg-in { flex: 1; min-height: 0; background: #f0f0f0; border: 1px solid #8ba6bf; display: flex; flex-direction: column; }
.dlg-tabs { height: 24px; flex: none; display: flex; align-items: flex-end; position: relative; margin-bottom: -1px; z-index: 1; }
.dt { height: 18px; width: 38px; text-align: center; line-height: 17px; background: linear-gradient(#f8f8f8, #d8d8d8); border: 1px solid #a0a0a0; border-bottom: 0; }
.dt-on { height: 21px; width: 45px; background: #fff; }
.dlg-body { height: 173px; flex: none; margin-right: 3px; background: #fff; border: 1px solid #a0a0a0; display: flex; position: relative; }
.dc1 { width: 120px; flex: none; padding: 16px 0 0 7px; }
.dl-row { display: flex; align-items: center; gap: 10px; height: 28px; }
.dl-r2 { margin-top: 9px; }
.dl-t2 { margin-left: 1px; }
.db { width: 28px; height: 27px; flex: none; border: 1px solid #b8b8b8; border-radius: 3px; background: linear-gradient(#f6f6f6, #dedede); display: flex; align-items: center; justify-content: center; }
.dbi { width: 24px; height: 24px; flex: none; }
.db-sel { border: 1px solid #1d6fa8; outline: 1px dotted #222; outline-offset: -3px; background: linear-gradient(#cfe8fa, #9accef); }
.db-blue { border: 1px solid #27608f; background: linear-gradient(#b8dcf5, #5aa0d4); }
.fs { border: 1px solid #d4dde3; border-radius: 4px; margin: 0; padding: 0; min-width: 0; }
.fs legend { padding: 0 3px; color: #2c2c2c; }
.fs-out { width: 81px; height: 56px; margin-top: 13px; display: flex; gap: 4px; padding: 8px 0 0 10px; }
.fs-out legend { margin-left: -4px; }
.dc2 { width: 44px; height: 138px; margin: 13px 0 0 0; flex: none; border: 1px solid #d4dde3; border-radius: 4px; display: flex; flex-direction: column; align-items: center; padding-top: 10px; gap: 3px; }
.db-g { height: 26px; background: #efefef; border-color: #cfcfcf; }
.db-new { margin-top: 6px; }
.dc3 { margin: 7px 0 0 7px; flex: none; }
.fs-lim { width: 136px; height: 114px; padding: 8px 0 0 6px; }
.fs-lim legend { margin-left: -2px; }
.sel { width: 108px; height: 21px; border: 1px solid #6a6a6a; border-radius: 3px; background: linear-gradient(#f4f4f4, #d4d4d4); display: flex; align-items: center; justify-content: space-between; padding: 0 6px 0 3px; color: #1c1c1c; }
.num { width: 108px; height: 20px; margin-top: 8px; background: #fff; border: 1px solid #e6e6e6; display: flex; align-items: center; justify-content: space-between; padding-left: 5px; }
.num-go { width: 16px; height: 18px; background: #f0f0f0; display: flex; align-items: center; justify-content: center; }
.num-go i { border: 4px solid transparent; border-left: 4px solid #444; border-right: 0; }
.dirs { display: flex; gap: 2px; margin: 9px 0 0 1px; }
.chk { display: flex; align-items: center; gap: 2px; margin-top: 16px; color: #8a8a8a; }
.box { width: 13px; height: 13px; border: 1px solid #c4c4c4; background: #f4f4f4; }
.dlg-foot { height: 41px; flex: none; display: flex; align-items: center; padding: 6px 8px 0 8px; border-bottom: 1px solid #a0a0a0; }
.help-btn { width: 22px; height: 21px; border: 1px solid #777; border-radius: 3px; background: linear-gradient(#f8f8f8, #dcdcdc); display: flex; align-items: center; justify-content: center; }
.help-i { width: 16px; height: 16px; }
.glass { width: 61px; height: 24px; margin-left: 41px; border: 1px solid #dfdfdf; border-radius: 3px; display: flex; align-items: center; gap: 5px; padding-left: 5px; background: #f0f0f0; }
.gbox { width: 13px; height: 13px; border: 1px solid #c0c0c0; background: #ececec; color: #aaa; font-size: 10px; line-height: 11px; text-align: center; }
.gl-i { width: 28px; height: 15px; }
.spacer { flex: 1; }
.btn { width: 73px; height: 21px; margin-left: 5px; border: 1px solid #8a8a8a; border-radius: 3px; background: linear-gradient(#f6f6f6, #d6d6d6); text-align: center; line-height: 19px; color: #111; }
.dlg-more { flex: 1; background: linear-gradient(#f4f4f4, #dedede); display: flex; align-items: center; justify-content: center; }
.dlg-more i { border: 5px solid transparent; border-bottom: 7px solid #000; border-top: 0; }

/* status */
.status { height: 22px; flex: none; background: linear-gradient(#f6f6f6, #c8c8c8); border-top: 1px solid #dcdcdc; border-bottom: 1px solid #111; display: flex; align-items: center; padding-left: 2px; color: #1c1c1c; }
.st-l { width: 1294px; padding-top: 4px; }
.st-n { padding-top: 4px; }
.st-n1 { width: 38px; }
```
